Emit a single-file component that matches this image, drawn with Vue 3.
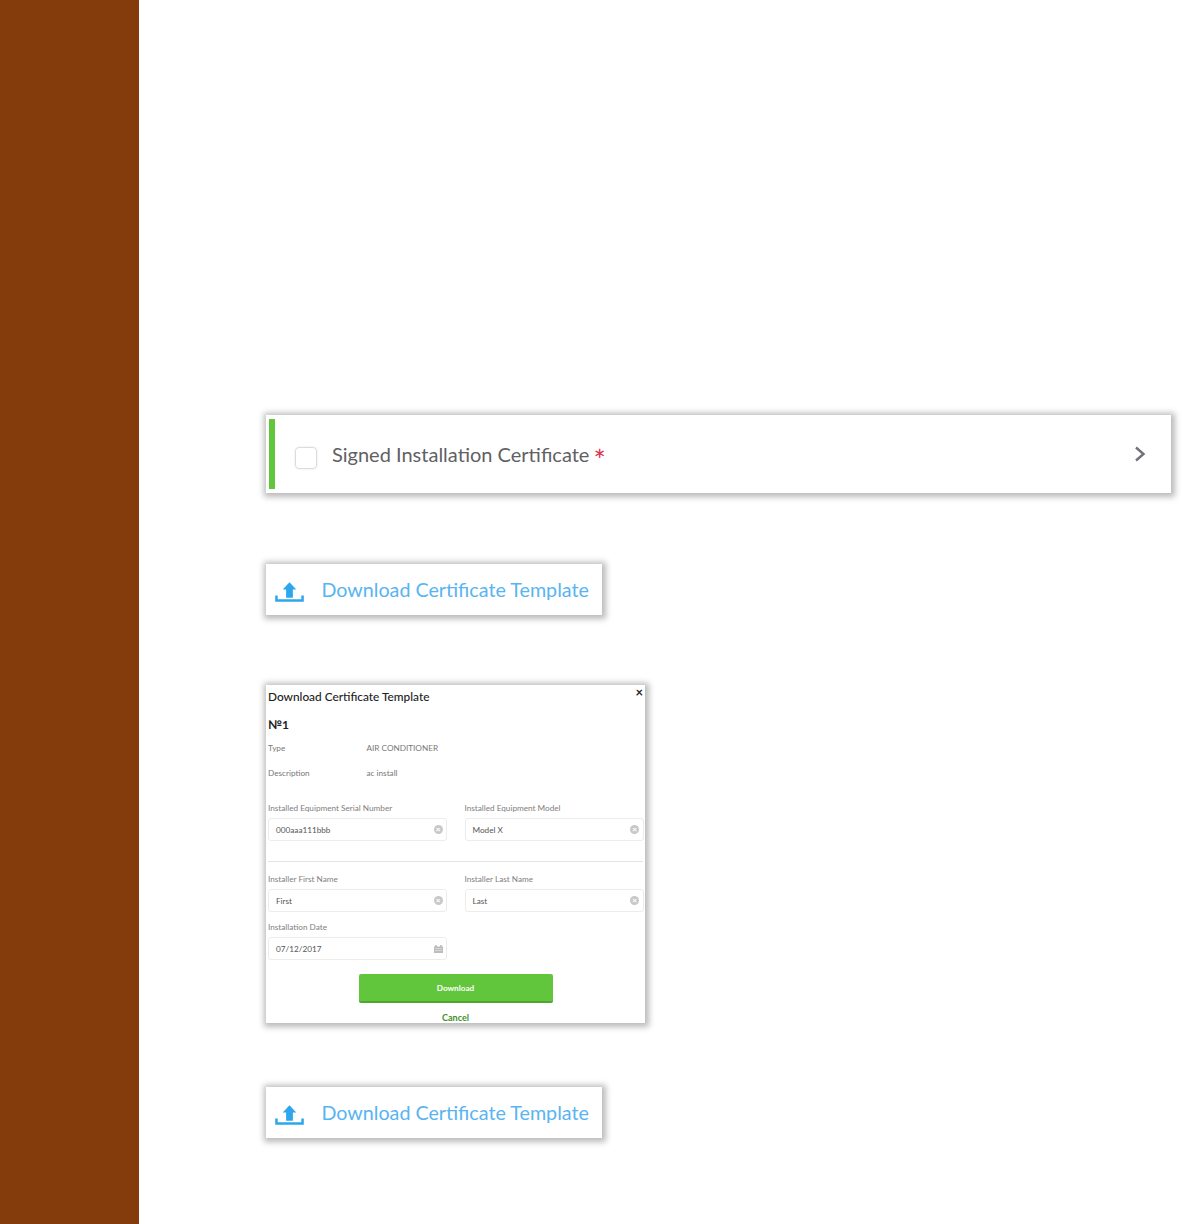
<script setup>
const topFields = [
  { label: 'Installed Equipment Serial Number', value: '000aaa111bbb' },
  { label: 'Installed Equipment Model', value: 'Model X' },
]
const nameFields = [
  { label: 'Installer First Name', value: 'First' },
  { label: 'Installer Last Name', value: 'Last' },
]
</script>

<template>
  <div class="page">
    <aside class="sidebar"></aside>
    <main class="main">
      <section class="card cert">
        <span class="accent"></span>
        <span class="check"></span>
        <span class="cert-title">Signed Installation Certificate</span>
        <span class="star">*</span>
        <svg class="chev" width="12" height="16" viewBox="0 0 12 16"><path d="M2 1.5 9.5 8 2 14.5" fill="none" stroke="#6f7276" stroke-width="2.4"/></svg>
      </section>

      <a class="card dl dl-first">
        <svg class="up" width="29" height="20" viewBox="0 0 30 20"><path d="M15 0 22 7.5H18.5V16H11.5V7.5H8Z" fill="#2ea6ee"/><path d="M1.5 13.5V18.7H28.5V13.5" fill="none" stroke="#2ea6ee" stroke-width="2.6"/></svg>
        <span class="dl-text">Download Certificate Template</span>
      </a>

      <section class="card modal">
        <span class="close">×</span>
        <h2 class="m-title">Download Certificate Template</h2>
        <h3 class="m-num">№1</h3>
        <div class="info"><span class="info-k">Type</span><span>AIR CONDITIONER</span></div>
        <div class="info info-2"><span class="info-k">Description</span><span>ac install</span></div>
        <div class="fields fields-top">
          <div v-for="f in topFields" :key="f.label" class="field">
            <label>{{ f.label }}</label>
            <div class="input"><span>{{ f.value }}</span><i class="clear">×</i></div>
          </div>
        </div>
        <hr class="rule" />
        <div class="fields">
          <div v-for="f in nameFields" :key="f.label" class="field">
            <label>{{ f.label }}</label>
            <div class="input"><span>{{ f.value }}</span><i class="clear">×</i></div>
          </div>
          <div class="field">
            <label>Installation Date</label>
            <div class="input">
              <span>07/12/2017</span>
              <svg width="9" height="8" viewBox="0 0 9 8"><path d="M0 1.5H9V8H0Z" fill="#bcbcbc"/><path d="M2 0V2M7 0V2" stroke="#9a9a9a"/><path d="M1 3.6H8M1 5.6H8" stroke="#e4e4e4" stroke-width=".7"/></svg>
            </div>
          </div>
        </div>
        <button class="btn">Download</button>
        <div class="cancel">Cancel</div>
      </section>

      <a class="card dl dl-last">
        <svg class="up" width="29" height="20" viewBox="0 0 30 20"><path d="M15 0 22 7.5H18.5V16H11.5V7.5H8Z" fill="#2ea6ee"/><path d="M1.5 13.5V18.7H28.5V13.5" fill="none" stroke="#2ea6ee" stroke-width="2.6"/></svg>
        <span class="dl-text">Download Certificate Template</span>
      </a>
    </main>
  </div>
</template>

<style>
html, body { margin: 0; background: #fff; }
</style>

<style scoped>
.page { display: flex; min-height: 1224px; font-family: Lato, "Open Sans", sans-serif; }
.sidebar { width: 139px; flex: none; background: #843c0c; }
.main { flex: 1; min-width: 0; padding: 415px 11px 0 127px; display: flex; flex-direction: column; align-items: flex-start; }
.card { background: #fff; box-sizing: border-box; box-shadow: 1px 1px 6px 3px rgba(0,0,0,.27); }
.cert { width: 905px; height: 78px; display: flex; align-items: center; padding: 4px 25px 4px 3px; }
.accent { width: 6px; align-self: stretch; background: #62c63c; }
.check { width: 20px; height: 20px; margin: 7px 15px 0 20px; border: 1px solid #dcdcdc; border-radius: 4px; box-shadow: 0 0 2px rgba(0,0,0,.12); }
.cert-title { font-size: 20px; color: #5f6164; line-height: 1; white-space: nowrap; }
.star { color: #d8324e; font-size: 29px; line-height: 1; margin: 10px 0 0 4px; }
.chev { margin-left: auto; }
.dl { width: 336px; height: 51px; display: flex; align-items: center; padding-left: 9px; }
.dl-first { margin-top: 71px; }
.dl-last { margin-top: 64px; }
.up { margin: 4px 17.5px 0 0; flex: none; }
.dl-text { font-size: 19.7px; color: #58b4f2; white-space: nowrap; }
.modal { position: relative; width: 379px; height: 338px; margin-top: 70px; padding: 0 2px; overflow: hidden; }
.close { position: absolute; top: 1px; right: 2px; font-size: 13px; font-weight: 700; line-height: 12px; color: #222; }
.m-title { margin: 4px 0 0; font-size: 11.85px; line-height: 16px; font-weight: 500; color: #222; }
.m-num { margin: 12px 0 0; font-size: 12px; line-height: 16px; font-weight: 700; color: #222; }
.info { display: flex; margin-top: 9px; font-size: 8.2px; line-height: 12px; color: #777; }
.info-2 { margin-top: 13px; }
.info-k { width: 98.5px; }
.fields { display: grid; grid-template-columns: 179px 179px; column-gap: 17.5px; row-gap: 9px; }
.fields-top { margin-top: 23px; }
label { display: block; font-size: 8.2px; line-height: 12px; color: #808080; }
.input { box-sizing: border-box; height: 23px; margin-top: 4px; padding: 0 3.5px 0 7px; display: flex; align-items: center; justify-content: space-between; border: 1px solid #ececec; border-radius: 3px; font-size: 8.2px; color: #555; }
.clear { width: 9px; height: 9px; border-radius: 50%; background: #c8c8c8; color: #fff; font: 700 8px/9px "Liberation Sans", sans-serif; text-align: center; }
.rule { margin: 20px 0 11px; border: 0; border-top: 1px solid #e4e4e4; }
.btn { display: block; width: 194px; height: 29px; margin: 14px auto 0; padding: 0; border: 0; border-radius: 2px; background: #62c63c; border-bottom: 2px solid #4fa82e; color: #fff; font: 700 8.2px Lato, sans-serif; }
.cancel { margin-top: 9px; font-size: 9px; font-weight: 700; line-height: 12px; text-align: center; color: #3d8f2a; }
</style>
